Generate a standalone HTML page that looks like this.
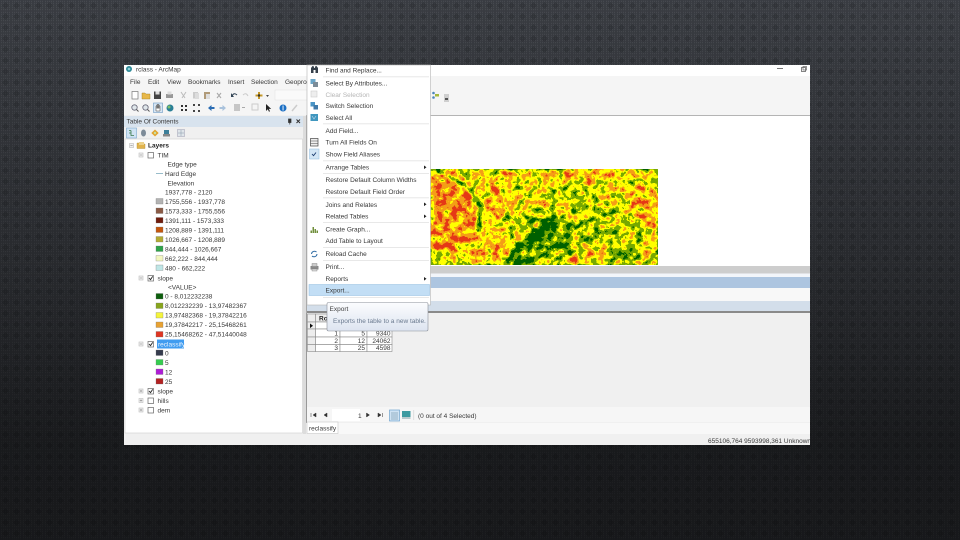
<!DOCTYPE html>
<html lang="en">
<head>
<meta charset="utf-8">
<title>rclass - ArcMap</title>
<style>
html,body{margin:0;padding:0;width:960px;height:540px;overflow:hidden;background:#222}
svg{display:block}
text{font-family:"Liberation Sans",sans-serif;font-size:6.5px;fill:#383838}
.b{font-weight:bold;fill:#222}
</style>
</head>
<body>
<svg width="960" height="540" viewBox="0 0 960 540" xmlns="http://www.w3.org/2000/svg">
<defs>
<pattern id="p" width="11" height="11" patternUnits="userSpaceOnUse">
<rect width="11" height="11" fill="#4b4e54"/>
<path d="M0 .5h11M0 2.500h11M0 4.500h11M0 6.500h11M0 8.500h11M0 10.500h11" stroke="#404349" stroke-width="1"/>
<path d="M.5 0v11M2.500 0v11M4.500 0v11M6.500 0v11M8.500 0v11M10.500 0v11" stroke="#3d4046" stroke-width="1"/>
<path d="M5.500 2L9 5.500L5.500 9L2 5.500Z" fill="#26282d" opacity=".38"/>
</pattern>
<linearGradient id="v" x1="0" y1="0" x2="0" y2="1">
<stop offset="0" stop-color="#000" stop-opacity=".06"/>
<stop offset=".5" stop-color="#000" stop-opacity=".36"/>
<stop offset=".82" stop-color="#000" stop-opacity=".6"/>
<stop offset="1" stop-color="#000" stop-opacity=".62"/>
</linearGradient>
<filter id="m" filterUnits="userSpaceOnUse" x="430" y="169" width="228" height="96" color-interpolation-filters="sRGB">
<feGaussianBlur in="SourceGraphic" stdDeviation="1.500" result="b"/>
<feTurbulence type="fractalNoise" baseFrequency="0.14" numOctaves="3" seed="11"/>
<feColorMatrix values="1 0 0 0 0 1 0 0 0 0 1 0 0 0 0 0 0 0 0 1" result="n"/>
<feComposite in="b" in2="n" operator="arithmetic" k1="0" k2="0.7" k3="1.1" k4="-0.44"/>
<feComponentTransfer>
<feFuncR type="discrete" tableValues="0 .47 1 .96 .9"/>
<feFuncG type="discrete" tableValues=".38 .66 1 .62 .22"/>
<feFuncB type="discrete" tableValues="0 0 0 .1 .08"/>
</feComponentTransfer>
</filter>
<filter id="s" x="-2%" y="-2%" width="104%" height="104%"><feGaussianBlur stdDeviation=".32"/></filter>
<linearGradient id="tip" x1="0" y1="0" x2="0" y2="1"><stop offset="0" stop-color="#fbfcfe"/><stop offset="1" stop-color="#dde4f0"/></linearGradient>
<clipPath id="cs"><rect x="124" y="434" width="686" height="11"/></clipPath>
</defs>

<rect width="960" height="540" fill="url(#p)"/>
<rect width="960" height="540" fill="url(#v)"/>

<g filter="url(#s)">
<!-- window -->
<rect x="124" y="65" width="686" height="380" fill="#f0f0f0"/>
<rect x="124" y="65" width="686" height="11" fill="#fff"/>
<rect x="124" y="76" width="686" height="39" fill="#f5f5f5"/>
<rect x="306" y="115" width="504" height="1.4" fill="#b4b4b4"/>
<rect x="306" y="116" width="504" height="150" fill="#fff"/>

<!-- title -->
<circle cx="129" cy="69" r="3" fill="#2f8a98"/>
<circle cx="129" cy="69" r="1.3" fill="#8fd0d8"/>
<text x="136" y="71.500" font-size="6.500">rclass - ArcMap</text>
<rect x="777" y="68" width="6" height=".9" fill="#666"/>
<rect x="801.500" y="67.500" width="4" height="4" fill="#fff" stroke="#666" stroke-width=".8"/>
<rect x="803" y="66.500" width="3.500" height="3.500" fill="none" stroke="#666" stroke-width=".7"/>

<!-- menu bar -->
<text x="130" y="84">File</text><text x="148" y="84">Edit</text><text x="167" y="84">View</text>
<text x="188" y="84">Bookmarks</text><text x="228" y="84">Insert</text><text x="251" y="84">Selection</text><text x="285" y="84">Geoproc</text>

<!-- toolbar row 1 -->
<rect x="132" y="91.500" width="6" height="7.500" fill="#fff" stroke="#777" stroke-width=".7"/>
<path d="M142 93h3l1 1h4v5h-8z" fill="#e8b84a" stroke="#9a7a20" stroke-width=".4"/>
<rect x="154" y="91.500" width="7" height="7.500" fill="#444"/><rect x="155.500" y="91.500" width="4" height="3" fill="#ddd"/>
<rect x="166" y="94" width="7" height="4" fill="#999"/><rect x="167.500" y="91.500" width="4" height="3" fill="#ddd"/>
<path d="M181 92l4 6M186 92l-4 6" stroke="#bbb" stroke-width="1"/>
<rect x="193" y="92" width="5" height="6.500" fill="#ccc"/><rect x="195" y="93" width="4" height="6" fill="#ddd"/>
<rect x="204" y="92" width="6" height="7" fill="#b09a78"/><rect x="206" y="94" width="4" height="5" fill="#ddd"/>
<path d="M217 93l4 5M221 93l-4 5" stroke="#aaa" stroke-width="1.100"/>
<path d="M232 96q2-4 5-1" fill="none" stroke="#345" stroke-width="1"/><path d="M231 93v4h3z" fill="#345"/>
<path d="M248 96q-2-4-5-1" fill="none" stroke="#ccc" stroke-width="1"/>
<path d="M259 92v7M255.500 95.500h7" stroke="#c79a2a" stroke-width="2"/><circle cx="259" cy="95.500" r="1.200" fill="#333"/>
<path d="M266 95h3l-1.500 2z" fill="#444"/>
<rect x="275" y="90" width="32" height="10" fill="#fafafa" stroke="#e0e0e0" stroke-width=".5"/>

<!-- toolbar row 2 -->
<circle cx="134.500" cy="107.500" r="2.700" fill="#dfe6ea" stroke="#667" stroke-width=".8"/><path d="M136.500 109.500l2 2" stroke="#555" stroke-width="1"/>
<circle cx="145.500" cy="107.500" r="2.700" fill="#dfe6ea" stroke="#667" stroke-width=".8"/><path d="M147.500 109.500l2 2" stroke="#555" stroke-width="1"/>
<rect x="153.500" y="103" width="9" height="9.500" fill="#d7e6f4" stroke="#6d9ac4" stroke-width=".6"/>
<path d="M156 111v-5l1-.5v3-4l1 0v4-4l1 0v4-3l1 .5v5z" fill="#fff" stroke="#444" stroke-width=".5"/>
<circle cx="170" cy="108" r="3.500" fill="#2c7f96"/><circle cx="169" cy="107" r="1.500" fill="#7cc06a"/>
<path d="M181 105h2v2h-2zM185 105h2v2h-2zM181 109h2v2h-2zM185 109h2v2h-2z" fill="#333"/>
<path d="M193 104h2v2h-2zM198 104h2v2h-2zM193 110h2v2h-2zM198 110h2v2h-2z" fill="#444"/>
<path d="M208 108l3.500-3v2h3v2h-3v2z" fill="#2a6cb3"/>
<path d="M226 108l-3.500-3v2h-3v2h3v2z" fill="#a9c2dc"/>
<rect x="234" y="104" width="6" height="7" fill="#c6c6c6"/><rect x="242" y="107" width="3" height="1" fill="#aaa"/>
<rect x="252" y="104" width="6" height="6" fill="none" stroke="#ccc" stroke-width="1"/>
<path d="M266 104v7l1.800-1.700 1.200 2.500 1-.5-1.200-2.400h2.400z" fill="#222"/>
<circle cx="283" cy="108" r="3.500" fill="#1f6fc4"/><rect x="282.600" y="105.500" width=".9" height="5" fill="#fff"/>
<path d="M292 111l5-6" stroke="#ccc" stroke-width="1.500"/>

<!-- far toolbar -->
<circle cx="433.500" cy="93" r="1.300" fill="#4d85bb"/><circle cx="433.500" cy="97.500" r="1.300" fill="#4d85bb"/>
<rect x="435" y="94" width="4" height="2.500" fill="#a5b83a"/>
<rect x="444" y="94" width="5" height="8" fill="#cfcfcf"/><rect x="445" y="98" width="3" height="2" fill="#555"/>

<!-- TOC -->
<rect x="124" y="116" width="179" height="318" fill="#f0f0f0"/>
<rect x="124" y="116" width="179" height="11" fill="#d8e3ee"/>
<text x="126.500" y="123.500" font-size="6.300">Table Of Contents</text>
<path d="M288.500 119h2.500v3.500h-2.500zM289.800 122.500v2" stroke="#333" stroke-width=".7" fill="#333"/>
<path d="M296.500 119.500l3.500 3.500M300 119.500l-3.500 3.500" stroke="#333" stroke-width="1"/>
<rect x="126.500" y="128" width="10" height="10" fill="#cfe3f4" stroke="#7aa7cd" stroke-width=".6"/>
<path d="M129 130.500h2M129 133h2v2.500h3M131 130.500v3" stroke="#3a7a4a" stroke-width=".8" fill="none"/>
<ellipse cx="143.500" cy="133" rx="2.500" ry="3.500" fill="#7d8b98"/>
<path d="M155 129.500l3.700 3.500-3.700 3.500-3.700-3.500z" fill="#e2a531"/><circle cx="155" cy="133" r="1.200" fill="#c9e0a0"/>
<rect x="164" y="130" width="5" height="4" fill="#3d7f99"/><rect x="163" y="134" width="7" height="2.500" fill="#888"/>
<rect x="177.500" y="129.500" width="7" height="7" fill="#dfe5ea" stroke="#aab" stroke-width=".6"/><path d="M178 133h6M181 130v6" stroke="#89a" stroke-width=".5"/>

<rect x="125" y="139" width="177.500" height="294" fill="#fff" stroke="#cfcfcf" stroke-width=".6"/>

<!-- tree expanders -->
<g fill="#f2f2f2" stroke="#bdbdbd" stroke-width=".6">
<rect x="129.500" y="143.500" width="4" height="4"/>
<rect x="139" y="153" width="4" height="4"/>
<rect x="139" y="276" width="4" height="4"/>
<rect x="139" y="342" width="4" height="4"/>
<rect x="139" y="389" width="4" height="4"/>
<rect x="139" y="398.500" width="4" height="4"/>
<rect x="139" y="408" width="4" height="4"/>
</g>
<path d="M130.300 145.500h2.400M139.800 155h2.400M139.800 278h2.400M139.800 344h2.400M139.800 391h2.400M141 389.800v2.400M139.800 400.500h2.400M141 399.300v2.400M139.800 410h2.400M141 408.800v2.400" stroke="#777" stroke-width=".5"/>

<!-- checkboxes -->
<g fill="#fff" stroke="#666" stroke-width=".7">
<rect x="148" y="152.500" width="5.500" height="5.500"/>
<rect x="148" y="275.500" width="5.500" height="5.500"/>
<rect x="148" y="341.500" width="5.500" height="5.500"/>
<rect x="148" y="388.500" width="5.500" height="5.500"/>
<rect x="148" y="398" width="5.500" height="5.500"/>
<rect x="148" y="407.500" width="5.500" height="5.500"/>
</g>
<path d="M149 278l1.500 1.600 2.200-3.200M149 344l1.500 1.600 2.200-3.200M149 391l1.500 1.600 2.200-3.200" fill="none" stroke="#222" stroke-width=".9"/>

<!-- folder -->
<path d="M137 143h3l1 1h4v4.500h-8z" fill="#e2b44e" stroke="#b08a30" stroke-width=".4"/>
<rect x="139" y="142" width="5" height="3" fill="#ecd28a"/>

<text x="148" y="147.500" class="b">Layers</text>
<text x="157.500" y="157.500">TIM</text>
<text x="167.500" y="166.500">Edge type</text>
<path d="M156 173.500h7" stroke="#8db5c4" stroke-width=".9"/>
<text x="165" y="176">Hard Edge</text>
<text x="167.500" y="185.500">Elevation</text>
<text x="165" y="194.500">1937,778 - 2120</text>

<g stroke="#777" stroke-width=".3">
<rect x="156" y="198.500" width="7" height="5.500" fill="#b3b3b3"/>
<rect x="156" y="208" width="7" height="5.500" fill="#8a5a44"/>
<rect x="156" y="217.500" width="7" height="5.500" fill="#6f1d0a"/>
<rect x="156" y="227" width="7" height="5.500" fill="#c4570f"/>
<rect x="156" y="236.500" width="7" height="5.500" fill="#b3ab33"/>
<rect x="156" y="246" width="7" height="5.500" fill="#2ea34a"/>
<rect x="156" y="255.500" width="7" height="5.500" fill="#f3f7c0"/>
<rect x="156" y="265" width="7" height="5.500" fill="#bfe6e6"/>
<rect x="156" y="293.500" width="7" height="5.500" fill="#0d5e0d"/>
<rect x="156" y="303" width="7" height="5.500" fill="#87a51a"/>
<rect x="156" y="312.500" width="7" height="5.500" fill="#f4f43a"/>
<rect x="156" y="322" width="7" height="5.500" fill="#e8a233"/>
<rect x="156" y="331.500" width="7" height="5.500" fill="#df3420"/>
<rect x="156" y="350" width="7" height="5.500" fill="#343a4e"/>
<rect x="156" y="359.500" width="7" height="5.500" fill="#35cc50"/>
<rect x="156" y="369" width="7" height="5.500" fill="#ae1fd6"/>
<rect x="156" y="378.500" width="7" height="5.500" fill="#b32020"/>
</g>

<text x="165" y="204">1755,556 - 1937,778</text>
<text x="165" y="213.500">1573,333 - 1755,556</text>
<text x="165" y="223">1391,111 - 1573,333</text>
<text x="165" y="232.500">1208,889 - 1391,111</text>
<text x="165" y="242">1026,667 - 1208,889</text>
<text x="165" y="251.500">844,444 - 1026,667</text>
<text x="165" y="261">662,222 - 844,444</text>
<text x="165" y="270.500">480 - 662,222</text>
<text x="157.500" y="280.500">slope</text>
<text x="168" y="289.500">&lt;VALUE&gt;</text>
<text x="165" y="298.500">0 - 8,012232238</text>
<text x="165" y="308">8,012232239 - 13,97482367</text>
<text x="165" y="317.500">13,97482368 - 19,37842216</text>
<text x="165" y="327">19,37842217 - 25,15468261</text>
<text x="165" y="336.500">25,15468262 - 47,51440048</text>
<rect x="157" y="339.500" width="27" height="9" fill="#3f9cf0"/>
<text x="158" y="346.500" style="fill:#eaf4ff">reclassify</text>
<text x="165" y="355.500">0</text>
<text x="165" y="365">5</text>
<text x="165" y="374.500">12</text>
<text x="165" y="384">25</text>
<text x="157.500" y="393.500">slope</text>
<text x="157.500" y="403">hills</text>
<text x="157.500" y="412.500">dem</text>

<!-- map: shapes are a slope bias, classified through noise -->
<g filter="url(#m)">
<rect x="430" y="169" width="228" height="96" fill="#8e8e8e"/>
<ellipse cx="448" cy="212" rx="30" ry="42" fill="#dcdcdc"/>
<ellipse cx="490" cy="245" rx="22" ry="20" fill="#b0b0b0"/>
<ellipse cx="495" cy="205" rx="12" ry="16" fill="#b8b8b8"/>
<ellipse cx="645" cy="205" rx="16" ry="20" fill="#c4c4c4"/>
<ellipse cx="598" cy="176" rx="45" ry="9" fill="#aaa"/>
<ellipse cx="580" cy="258" rx="30" ry="7" fill="#b0b0b0"/>
<ellipse cx="545" cy="238" rx="38" ry="24" fill="#505050"/>
<ellipse cx="572" cy="196" rx="26" ry="11" fill="#6c6c6c"/>
<ellipse cx="610" cy="230" rx="36" ry="18" fill="#6c6c6c"/>
<ellipse cx="625" cy="254" rx="18" ry="7" fill="#404040"/>
<ellipse cx="541" cy="229" rx="16" ry="11" fill="#000"/>
<path d="M506 265q3-14 14-24 8-6 14-5l-6 28z" fill="#181818"/>
<path d="M437 171q14 5 27 14 13 10 15 22l-2 26" fill="none" stroke="#000" stroke-width="3"/>
<path d="M509 222q-1-10-4-16M515 265q28-4 38-20 14-12 32-22 14-7 32-12M572 212q8-5 18-6" fill="none" stroke="#000" stroke-width="3"/>
<path d="M488 172q2 12 8 20t14 14q3 5 3 8" fill="none" stroke="#fff" stroke-width="5"/>
<path d="M500 175q5 1 9-3" fill="none" stroke="#fff" stroke-width="4"/>
<path d="M505 252q8-12 18-18 8-5 14-11" fill="none" stroke="#c8c8c8" stroke-width="4"/>
<path d="M527 202q6-8 12-12 6-6 11-14" fill="none" stroke="#d0d0d0" stroke-width="3"/>
</g>

<!-- panels under map -->
<rect x="306" y="266" width="504" height="7.500" fill="#cdcdcd"/>
<rect x="306" y="273.500" width="504" height="3.500" fill="#f2f5fa"/>
<rect x="306" y="277" width="504" height="11" fill="#adc5e0"/>
<rect x="306" y="288" width="504" height="13" fill="#f8f8f8"/>
<rect x="306" y="301" width="504" height="10" fill="#d3deea"/>
<rect x="306" y="311" width="504" height="2" fill="#8a8a8a"/>
<rect x="306" y="313" width="504" height="94" fill="#f0f0f0"/>
<rect x="303" y="116" width="3" height="318" fill="#dcdcdc"/>
<rect x="306" y="116" width="1" height="197" fill="#a8a8a8"/>
<rect x="306" y="313" width="1" height="110" fill="#999"/>

<!-- table -->
<g fill="none" stroke="#8a8a8a" stroke-width=".6">
<rect x="307.500" y="314" width="8" height="8" fill="#ededed"/>
<rect x="315.500" y="314" width="24.500" height="8" fill="#ededed"/>
<rect x="340" y="314" width="27" height="8" fill="#ededed"/>
<rect x="307.500" y="322" width="8" height="7" fill="#ededed"/>
<rect x="315.500" y="322" width="76.500" height="7" fill="#fff"/>
<rect x="307.500" y="329" width="8" height="8" fill="#ededed"/>
<rect x="307.500" y="337" width="8" height="7.500" fill="#ededed"/>
<rect x="307.500" y="344.500" width="8" height="7" fill="#ededed"/>
<rect x="315.500" y="329" width="24.500" height="8" fill="#fff"/>
<rect x="315.500" y="337" width="24.500" height="7.500" fill="#fff"/>
<rect x="315.500" y="344.500" width="24.500" height="7" fill="#fff"/>
<rect x="340" y="329" width="27" height="8" fill="#fff"/>
<rect x="340" y="337" width="27" height="7.500" fill="#fff"/>
<rect x="340" y="344.500" width="27" height="7" fill="#fff"/>
<rect x="367" y="329" width="25" height="8" fill="#fff"/>
<rect x="367" y="337" width="25" height="7.500" fill="#fff"/>
<rect x="367" y="344.500" width="25" height="7" fill="#fff"/>
</g>
<path d="M310 323.500l3 2.300-3 2.300z" fill="#111"/>
<text x="319" y="320.500" class="b">Ro</text>
<g>
<text x="338" y="335.500" text-anchor="end">1</text><text x="365" y="335.500" text-anchor="end">5</text><text x="390.500" y="335.500" text-anchor="end">9340</text>
<text x="338" y="343" text-anchor="end">2</text><text x="365" y="343" text-anchor="end">12</text><text x="390.500" y="343" text-anchor="end">24062</text>
<text x="338" y="350" text-anchor="end">3</text><text x="365" y="350" text-anchor="end">25</text><text x="390.500" y="350" text-anchor="end">4598</text>
</g>

<!-- nav bar -->
<rect x="307" y="407" width="503" height="15" fill="#f6f6f6"/>
<rect x="332" y="409" width="28" height="12" fill="#fff"/>
<path d="M311 413v4M316 413l-3 2 3 2zM327 413l-3 2 3 2zM366.500 413l3 2-3 2zM378 413l3 2-3 2zM382.500 413v4" fill="#333" stroke="#333" stroke-width=".5"/>
<text x="358" y="418">1</text>
<rect x="389.500" y="410" width="10" height="11" fill="#cfe3f4" stroke="#6fa4cf" stroke-width=".7"/>
<path d="M391 413h7M391 415h7M391 417h7M391 419h7" stroke="#5b7f95" stroke-width=".6"/>
<rect x="402" y="411" width="8.500" height="6" fill="#3c9aa0"/><rect x="402" y="417" width="8.500" height="2" fill="#b9c9cc"/>
<rect x="413.500" y="410" width=".6" height="10" fill="#ccc"/>
<text x="418" y="418">(0 out of 4 Selected)</text>

<!-- tab -->
<rect x="338" y="423" width="472" height="11" fill="#f8f8f8"/>
<rect x="307" y="422" width="31" height="11.500" fill="#fff" stroke="#c8c8c8" stroke-width=".6"/>
<text x="309" y="430.500">reclassify</text>

<!-- status -->
<g clip-path="url(#cs)"><text x="708" y="443" font-size="6.300">655106,764  9593998,361 Unknown Units</text></g>

<!-- context menu -->
<rect x="307" y="65" width="123.500" height="240" fill="#fff" stroke="#b4b4b4" stroke-width=".6"/>
<g fill="#dedede">
<rect x="323" y="76.500" width="106" height=".7"/>
<rect x="323" y="123.500" width="106" height=".7"/>
<rect x="323" y="160.500" width="106" height=".7"/>
<rect x="323" y="173" width="106" height=".7"/>
<rect x="323" y="197.500" width="106" height=".7"/>
<rect x="323" y="222" width="106" height=".7"/>
<rect x="323" y="247" width="106" height=".7"/>
<rect x="323" y="260" width="106" height=".7"/>
<rect x="323" y="297" width="106" height=".7"/>
</g>
<rect x="309" y="284.500" width="120.500" height="11" fill="#c2def5" stroke="#8fbce0" stroke-width=".5"/>

<path d="M311 73v-5l1.500-2h1l.7 2h.6l.7-2h1l1.500 2v5h-2.500v-3h-2v3z" fill="#34404c"/>
<rect x="310.500" y="79" width="5" height="5" fill="#6aa6c8"/><rect x="313" y="82" width="5" height="5" fill="#7c8c98"/>
<rect x="311" y="91" width="6" height="6" fill="#eee" stroke="#ccc" stroke-width=".6"/>
<rect x="310.500" y="102" width="4.500" height="4.500" fill="#4b95c6"/><rect x="313.500" y="105" width="4.500" height="4.500" fill="#3f79a8"/>
<rect x="310.500" y="114" width="7.500" height="7" fill="#3f97bf"/><path d="M312 116l2 3 2-3" stroke="#cde" stroke-width=".6" fill="none"/>
<rect x="310.500" y="138.500" width="7.500" height="7.500" fill="#eee" stroke="#444" stroke-width=".7"/><path d="M310.500 141h7.500M310.500 143.500h7.500" stroke="#444" stroke-width=".6"/>
<rect x="309.500" y="149" width="9.500" height="10" fill="#d3e6f6" stroke="#8fbce0" stroke-width=".5"/>
<path d="M312 154l1.500 1.700 2.500-3.200" fill="none" stroke="#1c3c70" stroke-width=".9"/>
<path d="M310.500 233v-2.500h1.500v2.500zM312.500 233v-6h1.500v6zM314.500 233v-4h1.500v4zM316.500 233v-2.500h1.500v2.500z" fill="#6f8f3a"/>
<path d="M311.500 254a3 3 0 0 1 5-2M317 254a3 3 0 0 1-5 2" fill="none" stroke="#2e6ba3" stroke-width="1"/>
<rect x="310.500" y="266" width="8" height="3.500" fill="#8a8a8a"/><rect x="312" y="263.500" width="5" height="3" fill="#ccc" stroke="#777" stroke-width=".4"/><rect x="312" y="269" width="5" height="2" fill="#ddd" stroke="#777" stroke-width=".4"/>

<text x="325.500" y="72.300">Find and Replace...</text>
<text x="325.500" y="85.300">Select By Attributes...</text>
<text x="325.500" y="96.800" style="fill:#b6b6b6">Clear Selection</text>
<text x="325.500" y="108">Switch Selection</text>
<text x="325.500" y="119.800">Select All</text>
<text x="325.500" y="132.800">Add Field...</text>
<text x="325.500" y="144.500">Turn All Fields On</text>
<text x="325.500" y="156.300">Show Field Aliases</text>
<text x="325.500" y="169.300">Arrange Tables</text>
<text x="325.500" y="182">Restore Default Column Widths</text>
<text x="325.500" y="193.800">Restore Default Field Order</text>
<text x="325.500" y="206.800">Joins and Relates</text>
<text x="325.500" y="218.500">Related Tables</text>
<text x="325.500" y="231.500">Create Graph...</text>
<text x="325.500" y="243.200">Add Table to Layout</text>
<text x="325.500" y="256.200">Reload Cache</text>
<text x="325.500" y="269.200">Print...</text>
<text x="325.500" y="281">Reports</text>
<text x="325.500" y="292.300">Export...</text>
<path d="M424 165.500l2.500 1.800-2.500 1.800zM424 202.500l2.500 1.800-2.500 1.800zM424 214.500l2.500 1.800-2.500 1.800zM424 277l2.500 1.800-2.500 1.800z" fill="#222"/>

<!-- tooltip -->
<rect x="327" y="302.500" width="101" height="28.500" rx="1.500" fill="url(#tip)" stroke="#8a8f98" stroke-width=".6"/>
<text x="329.500" y="310.800" style="fill:#444">Export</text>
<text x="333" y="323" style="fill:#6b7a8f">Exports the table to a new table.</text>
</g>
</svg>
</body>
</html>
